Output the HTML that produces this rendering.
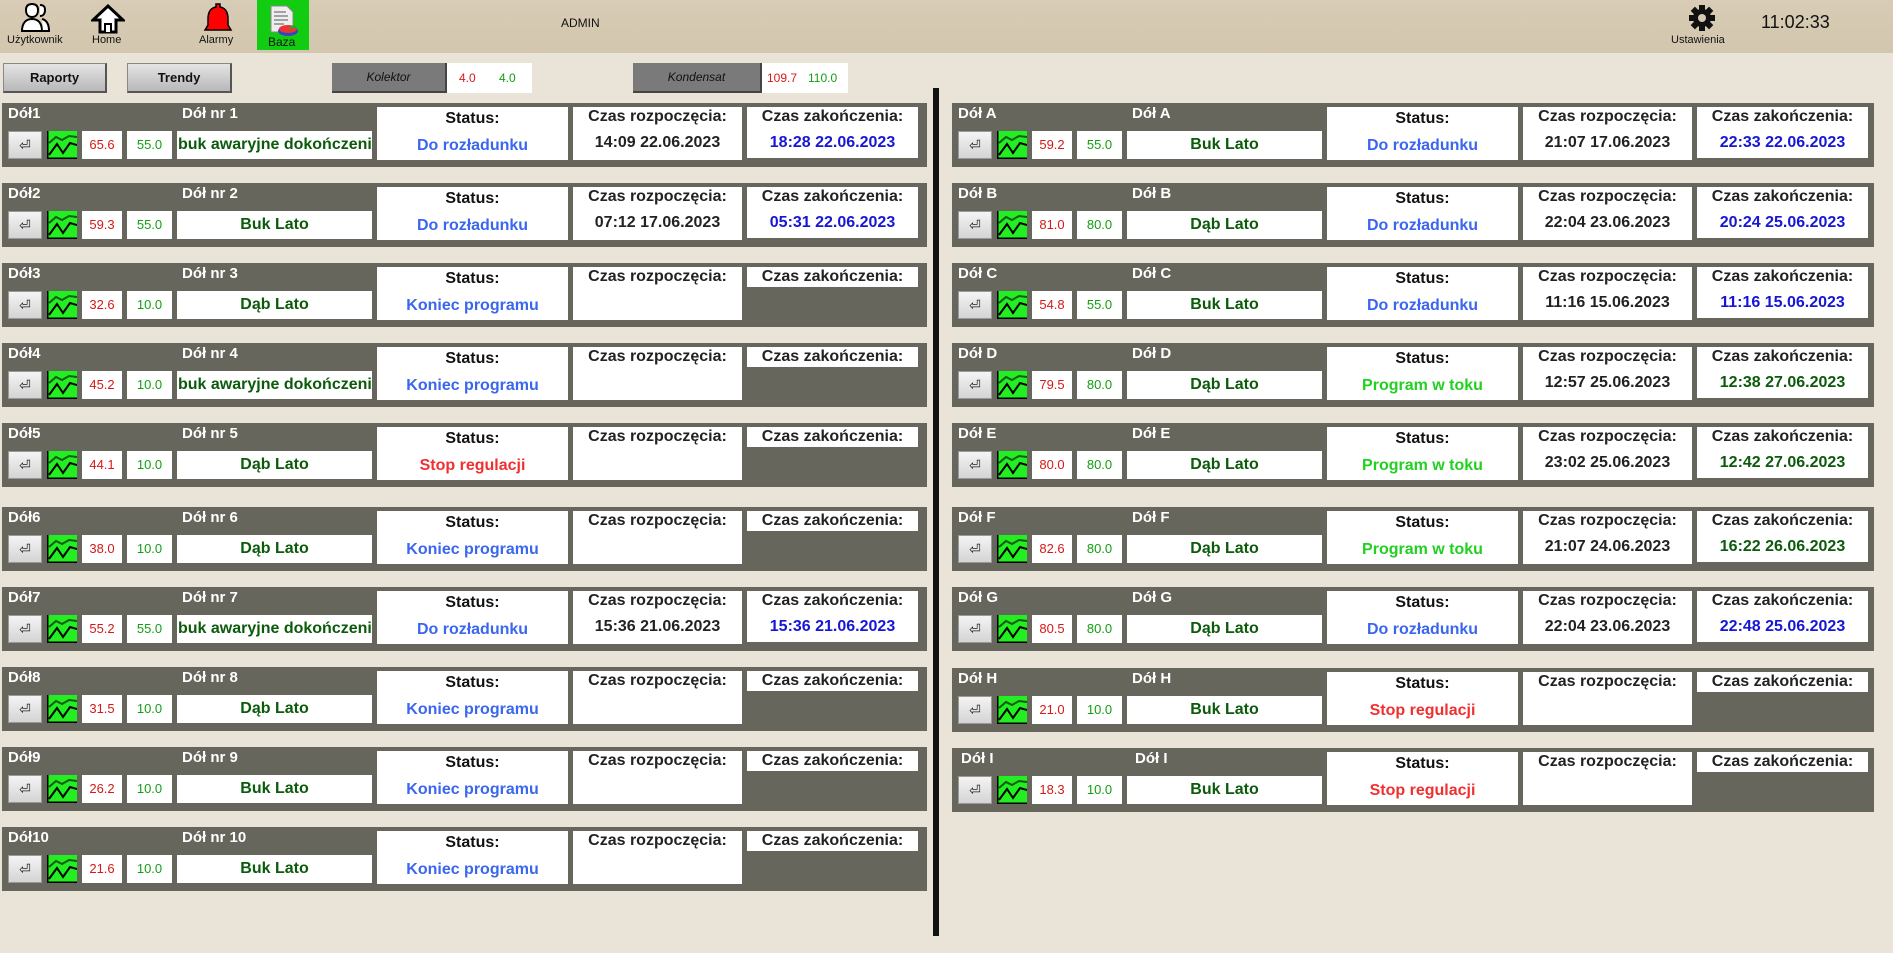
<!DOCTYPE html>
<html><head><meta charset="utf-8"><style>
*{box-sizing:border-box;margin:0;padding:0}
body{width:1893px;height:953px;overflow:hidden;position:relative;font-family:"Liberation Sans",Arial,sans-serif;background:#e9e3d8;}
.hdr{position:absolute;left:0;top:0;width:1893px;height:53px;background:linear-gradient(#d8ccb6,#d3c6ae);}
.a{position:absolute}
.hl{position:absolute;font-size:11px;color:#111;white-space:nowrap}
.btn{position:absolute;top:63px;height:30px;background:linear-gradient(#e4e4e4,#b8b8b8);border:1px solid #888;border-right:2px solid #555;border-bottom:2px solid #555;font-size:13px;font-weight:bold;text-align:center;line-height:27px;color:#111}
.dk{position:absolute;top:63px;height:30px;background:#7a7a7a;border-right:2px solid #444;border-bottom:2px solid #444;font-size:12px;font-style:italic;text-align:center;line-height:28px;color:#111}
.vb{position:absolute;top:63px;height:30px;background:#fff;font-size:12px;line-height:30px}
.p{position:absolute;width:925px;height:64px;background:#66665c}
.p b.l1,.p b.l2{position:absolute;top:2px;color:#fff;font-size:15px}
.l1{left:6px}.l2{left:180px}
.bk{position:absolute;left:6px;top:28px;width:34px;height:28px;background:linear-gradient(#f4f4f4,#d4d4d4);border:1px solid #999;font-size:14px;text-align:center;line-height:26px;color:#222}
.ch{position:absolute;left:45px;top:28px;width:30px;height:28px}
.vr,.vg{position:absolute;top:28px;height:28px;background:#fff;font-size:13px;text-align:center;line-height:28px}
.vr{left:80px;width:40px;color:#d81818}.vg{left:125px;width:45px;color:#12a012}
.nm{position:absolute;left:175px;top:28px;width:195px;height:28px;background:#fff;font-size:16px;font-weight:bold;color:#0c5a0c;text-align:center;line-height:28px;white-space:nowrap;overflow:hidden}
.nm.lf{text-align:left;padding-left:1px}
.st,.s1,.s2{position:absolute;top:4px;height:53px;background:#fff;text-align:center;font-size:16px;font-weight:bold}
.st{left:375px;width:191px}.s1{left:571px;width:169px}.s2{left:745px;width:171px;height:51px}
.s2.e{height:20px}
.st b{position:absolute;left:0;right:0;top:3px;color:#111}
.st span{position:absolute;left:0;right:0;top:30px}
.s1 b,.s2 b{position:absolute;left:0;right:0;top:1px;color:#222}
.s1 span,.s2 span{position:absolute;left:0;right:0;top:27px;color:#222}
.c1{color:#3a66f0!important}.c2{color:#1616d6!important}.c3{color:#22d022!important}.c4{color:#f03030!important}.c5{color:#0c5a0c!important}
</style></head><body>
<div class="hdr"></div>
<svg class="a" style="left:20px;top:3px" width="30" height="30" viewBox="0 0 30 30"><path d="M12 14c4 0 6-3 6-7s-2-6-6-6-6 2-6 6 2 7 6 7zM2 28c0-8 4-12 10-12s10 4 10 12z" fill="#fff" stroke="#000" stroke-width="2"/><path d="M20 13c3 0 5-2 5-6s-2-5-5-5M22 16c4 1 7 4 7 12h-6" fill="#fff" stroke="#000" stroke-width="2"/></svg>
<div class="hl" style="left:7px;top:34px">Użytkownik</div>
<svg class="a" style="left:91px;top:4px" width="34" height="30" viewBox="0 0 34 30"><path d="M17 2L2 16h7v12h16V16h7z" fill="#fff" stroke="#000" stroke-width="3" stroke-linejoin="miter"/><path d="M14 28V20h6v8" fill="#fff" stroke="#000" stroke-width="2"/></svg>
<div class="hl" style="left:92px;top:34px">Home</div>
<svg class="a" style="left:203px;top:2px" width="30" height="32" viewBox="0 0 30 32"><path d="M13 2h4v3c6 1 8 6 8 12v6l3 5H2l3-5v-6c0-6 2-11 8-12z" fill="#f00" stroke="#000" stroke-width="1.5"/></svg>
<div class="hl" style="left:199px;top:34px">Alarmy</div>
<div class="a" style="left:257px;top:0;width:52px;height:50px;background:#11cc11"></div>
<svg class="a" style="left:269px;top:5px" width="30" height="32" viewBox="0 0 30 32"><path d="M2 1h16l6 6v20H2z" fill="#eee" stroke="#888"/><path d="M5 7h12M5 11h14M5 15h14M5 19h10" stroke="#888" stroke-width="1.5"/><ellipse cx="19" cy="26" rx="10" ry="5" fill="#3344cc"/><ellipse cx="19" cy="24" rx="9" ry="4" fill="#e33"/><path d="M19 24l5-4a9 4 0 0 1 4 3z" fill="#2a2"/></svg>
<div class="hl" style="left:268px;top:35px;font-size:12px">Baza</div>
<div class="hl" style="left:561px;top:16px;font-size:12px">ADMIN</div>
<svg class="a" style="left:1689px;top:5px" width="26" height="26" viewBox="0 0 26 26"><g fill="#111"><circle cx="13" cy="13" r="9"/><rect x="10" y="0" width="6" height="26"/><rect x="0" y="10" width="26" height="6"/><rect x="10" y="0" width="6" height="26" transform="rotate(45 13 13)"/><rect x="10" y="0" width="6" height="26" transform="rotate(-45 13 13)"/></g><circle cx="13" cy="13" r="4" fill="#d6c9b1"/></svg>
<div class="hl" style="left:1671px;top:34px">Ustawienia</div>
<div class="hl" style="left:1761px;top:12px;font-size:18px">11:02:33</div>

<div class="btn" style="left:3px;width:104px">Raporty</div>
<div class="btn" style="left:127px;width:105px">Trendy</div>
<div class="dk" style="left:332px;width:115px">Kolektor</div>
<div class="vb" style="left:447px;width:85px"><span style="position:absolute;left:12px;color:#d81818">4.0</span><span style="position:absolute;left:52px;color:#12a012">4.0</span></div>
<div class="dk" style="left:633px;width:129px">Kondensat</div>
<div class="vb" style="left:762px;width:86px"><span style="position:absolute;left:5px;color:#d81818">109.7</span><span style="position:absolute;left:46px;color:#12a012">110.0</span></div>
<div class="a" style="left:933px;top:88px;width:6px;height:848px;background:#111"></div>

<svg width="0" height="0" style="position:absolute"><defs><symbol id="cg" viewBox="0 0 30 28"><rect width="30" height="28" fill="#22ee22"/><path d="M0 0V28H30" stroke="#000" stroke-width="3" fill="none"/><path d="M2 12L9 6L15 9L22 5L30 6" stroke="#145a14" stroke-width="2" fill="none"/><path d="M2 24L10 13L16 22L23 12L30 14" stroke="#000" stroke-width="2" fill="none"/></symbol></defs></svg>

<!-- LEFT -->
<div class="p" style="left:2px;top:103px"><b class="l1">Dół1</b><b class="l2">Dół nr 1</b><div class="bk">⏎</div><svg class="ch"><use href="#cg"/></svg><div class="vr">65.6</div><div class="vg">55.0</div><div class="nm lf">buk awaryjne dokończenie</div><div class="st"><b>Status:</b><span class="c1">Do rozładunku</span></div><div class="s1"><b>Czas rozpoczęcia:</b><span>14:09 22.06.2023</span></div><div class="s2"><b>Czas zakończenia:</b><span class="c2">18:28 22.06.2023</span></div></div>
<div class="p" style="left:2px;top:183px"><b class="l1">Dół2</b><b class="l2">Dół nr 2</b><div class="bk">⏎</div><svg class="ch"><use href="#cg"/></svg><div class="vr">59.3</div><div class="vg">55.0</div><div class="nm">Buk Lato</div><div class="st"><b>Status:</b><span class="c1">Do rozładunku</span></div><div class="s1"><b>Czas rozpoczęcia:</b><span>07:12 17.06.2023</span></div><div class="s2"><b>Czas zakończenia:</b><span class="c2">05:31 22.06.2023</span></div></div>
<div class="p" style="left:2px;top:263px"><b class="l1">Dół3</b><b class="l2">Dół nr 3</b><div class="bk">⏎</div><svg class="ch"><use href="#cg"/></svg><div class="vr">32.6</div><div class="vg">10.0</div><div class="nm">Dąb Lato</div><div class="st"><b>Status:</b><span class="c1">Koniec programu</span></div><div class="s1"><b>Czas rozpoczęcia:</b></div><div class="s2 e"><b>Czas zakończenia:</b></div></div>
<div class="p" style="left:2px;top:343px"><b class="l1">Dół4</b><b class="l2">Dół nr 4</b><div class="bk">⏎</div><svg class="ch"><use href="#cg"/></svg><div class="vr">45.2</div><div class="vg">10.0</div><div class="nm lf">buk awaryjne dokończenie</div><div class="st"><b>Status:</b><span class="c1">Koniec programu</span></div><div class="s1"><b>Czas rozpoczęcia:</b></div><div class="s2 e"><b>Czas zakończenia:</b></div></div>
<div class="p" style="left:2px;top:423px"><b class="l1">Dół5</b><b class="l2">Dół nr 5</b><div class="bk">⏎</div><svg class="ch"><use href="#cg"/></svg><div class="vr">44.1</div><div class="vg">10.0</div><div class="nm">Dąb Lato</div><div class="st"><b>Status:</b><span class="c4">Stop regulacji</span></div><div class="s1"><b>Czas rozpoczęcia:</b></div><div class="s2 e"><b>Czas zakończenia:</b></div></div>
<div class="p" style="left:2px;top:507px"><b class="l1">Dół6</b><b class="l2">Dół nr 6</b><div class="bk">⏎</div><svg class="ch"><use href="#cg"/></svg><div class="vr">38.0</div><div class="vg">10.0</div><div class="nm">Dąb Lato</div><div class="st"><b>Status:</b><span class="c1">Koniec programu</span></div><div class="s1"><b>Czas rozpoczęcia:</b></div><div class="s2 e"><b>Czas zakończenia:</b></div></div>
<div class="p" style="left:2px;top:587px"><b class="l1">Dół7</b><b class="l2">Dół nr 7</b><div class="bk">⏎</div><svg class="ch"><use href="#cg"/></svg><div class="vr">55.2</div><div class="vg">55.0</div><div class="nm lf">buk awaryjne dokończenie</div><div class="st"><b>Status:</b><span class="c1">Do rozładunku</span></div><div class="s1"><b>Czas rozpoczęcia:</b><span>15:36 21.06.2023</span></div><div class="s2"><b>Czas zakończenia:</b><span class="c2">15:36 21.06.2023</span></div></div>
<div class="p" style="left:2px;top:667px"><b class="l1">Dół8</b><b class="l2">Dół nr 8</b><div class="bk">⏎</div><svg class="ch"><use href="#cg"/></svg><div class="vr">31.5</div><div class="vg">10.0</div><div class="nm">Dąb Lato</div><div class="st"><b>Status:</b><span class="c1">Koniec programu</span></div><div class="s1"><b>Czas rozpoczęcia:</b></div><div class="s2 e"><b>Czas zakończenia:</b></div></div>
<div class="p" style="left:2px;top:747px"><b class="l1">Dół9</b><b class="l2">Dół nr 9</b><div class="bk">⏎</div><svg class="ch"><use href="#cg"/></svg><div class="vr">26.2</div><div class="vg">10.0</div><div class="nm">Buk Lato</div><div class="st"><b>Status:</b><span class="c1">Koniec programu</span></div><div class="s1"><b>Czas rozpoczęcia:</b></div><div class="s2 e"><b>Czas zakończenia:</b></div></div>
<div class="p" style="left:2px;top:827px"><b class="l1">Dół10</b><b class="l2">Dół nr 10</b><div class="bk">⏎</div><svg class="ch"><use href="#cg"/></svg><div class="vr">21.6</div><div class="vg">10.0</div><div class="nm">Buk Lato</div><div class="st"><b>Status:</b><span class="c1">Koniec programu</span></div><div class="s1"><b>Czas rozpoczęcia:</b></div><div class="s2 e"><b>Czas zakończenia:</b></div></div>

<!-- RIGHT -->
<div class="p" style="left:952px;top:103px;width:922px"><b class="l1">Dół A</b><b class="l2">Dół A</b><div class="bk">⏎</div><svg class="ch"><use href="#cg"/></svg><div class="vr">59.2</div><div class="vg">55.0</div><div class="nm c5">Buk Lato</div><div class="st"><b>Status:</b><span class="c1">Do rozładunku</span></div><div class="s1"><b>Czas rozpoczęcia:</b><span>21:07 17.06.2023</span></div><div class="s2"><b>Czas zakończenia:</b><span class="c2">22:33 22.06.2023</span></div></div>
<div class="p" style="left:952px;top:183px;width:922px"><b class="l1">Dół B</b><b class="l2">Dół B</b><div class="bk">⏎</div><svg class="ch"><use href="#cg"/></svg><div class="vr">81.0</div><div class="vg">80.0</div><div class="nm">Dąb Lato</div><div class="st"><b>Status:</b><span class="c1">Do rozładunku</span></div><div class="s1"><b>Czas rozpoczęcia:</b><span>22:04 23.06.2023</span></div><div class="s2"><b>Czas zakończenia:</b><span class="c2">20:24 25.06.2023</span></div></div>
<div class="p" style="left:952px;top:263px;width:922px"><b class="l1">Dół C</b><b class="l2">Dół C</b><div class="bk">⏎</div><svg class="ch"><use href="#cg"/></svg><div class="vr">54.8</div><div class="vg">55.0</div><div class="nm">Buk Lato</div><div class="st"><b>Status:</b><span class="c1">Do rozładunku</span></div><div class="s1"><b>Czas rozpoczęcia:</b><span>11:16 15.06.2023</span></div><div class="s2"><b>Czas zakończenia:</b><span class="c2">11:16 15.06.2023</span></div></div>
<div class="p" style="left:952px;top:343px;width:922px"><b class="l1">Dół D</b><b class="l2">Dół D</b><div class="bk">⏎</div><svg class="ch"><use href="#cg"/></svg><div class="vr">79.5</div><div class="vg">80.0</div><div class="nm">Dąb Lato</div><div class="st"><b>Status:</b><span class="c3">Program w toku</span></div><div class="s1"><b>Czas rozpoczęcia:</b><span>12:57 25.06.2023</span></div><div class="s2"><b>Czas zakończenia:</b><span class="c5">12:38 27.06.2023</span></div></div>
<div class="p" style="left:952px;top:423px;width:922px"><b class="l1">Dół E</b><b class="l2">Dół E</b><div class="bk">⏎</div><svg class="ch"><use href="#cg"/></svg><div class="vr">80.0</div><div class="vg">80.0</div><div class="nm">Dąb Lato</div><div class="st"><b>Status:</b><span class="c3">Program w toku</span></div><div class="s1"><b>Czas rozpoczęcia:</b><span>23:02 25.06.2023</span></div><div class="s2"><b>Czas zakończenia:</b><span class="c5">12:42 27.06.2023</span></div></div>
<div class="p" style="left:952px;top:507px;width:922px"><b class="l1">Dół F</b><b class="l2">Dół F</b><div class="bk">⏎</div><svg class="ch"><use href="#cg"/></svg><div class="vr">82.6</div><div class="vg">80.0</div><div class="nm">Dąb Lato</div><div class="st"><b>Status:</b><span class="c3">Program w toku</span></div><div class="s1"><b>Czas rozpoczęcia:</b><span>21:07 24.06.2023</span></div><div class="s2"><b>Czas zakończenia:</b><span class="c5">16:22 26.06.2023</span></div></div>
<div class="p" style="left:952px;top:587px;width:922px"><b class="l1">Dół G</b><b class="l2">Dół G</b><div class="bk">⏎</div><svg class="ch"><use href="#cg"/></svg><div class="vr">80.5</div><div class="vg">80.0</div><div class="nm">Dąb Lato</div><div class="st"><b>Status:</b><span class="c1">Do rozładunku</span></div><div class="s1"><b>Czas rozpoczęcia:</b><span>22:04 23.06.2023</span></div><div class="s2"><b>Czas zakończenia:</b><span class="c2">22:48 25.06.2023</span></div></div>
<div class="p" style="left:952px;top:668px;width:922px"><b class="l1">Dół H</b><b class="l2">Dół H</b><div class="bk">⏎</div><svg class="ch"><use href="#cg"/></svg><div class="vr">21.0</div><div class="vg">10.0</div><div class="nm">Buk Lato</div><div class="st"><b>Status:</b><span class="c4">Stop regulacji</span></div><div class="s1"><b>Czas rozpoczęcia:</b></div><div class="s2 e"><b>Czas zakończenia:</b></div></div>
<div class="p" style="left:952px;top:748px;width:922px"><b class="l1" style="left:9px">Dół I</b><b class="l2" style="left:183px">Dół I</b><div class="bk">⏎</div><svg class="ch"><use href="#cg"/></svg><div class="vr">18.3</div><div class="vg">10.0</div><div class="nm">Buk Lato</div><div class="st"><b>Status:</b><span class="c4">Stop regulacji</span></div><div class="s1"><b>Czas rozpoczęcia:</b></div><div class="s2 e"><b>Czas zakończenia:</b></div></div>
</body></html>
